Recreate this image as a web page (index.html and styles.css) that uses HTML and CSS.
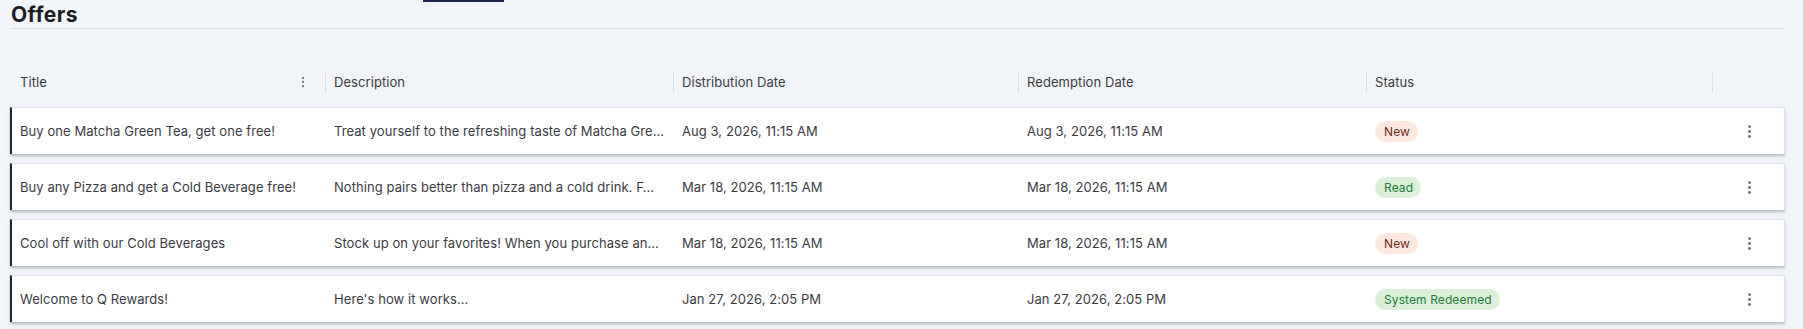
FILE: index.html
```html
<!DOCTYPE html>
<html lang="en">
<head>
<meta charset="utf-8">
<title>Offers</title>
<link rel="stylesheet" href="styles.css">
</head>
<body>
<div class="tabs"><span class="tab-indicator"></span></div>
<header class="page-head">
  <h1 class="page-title">Offers</h1>
</header>
<section class="table">
  <div class="thead">
    <div class="th th-first"><span>Title</span>
      <svg class="th-menu" viewBox="0 0 24 24" width="14" height="14"><circle cx="12" cy="5" r="2"/><circle cx="12" cy="12" r="2"/><circle cx="12" cy="19" r="2"/></svg>
    </div>
    <div class="th"><span>Description</span></div>
    <div class="th"><span>Distribution Date</span></div>
    <div class="th"><span>Redemption Date</span></div>
    <div class="th"><span>Status</span></div>
    <div class="th"></div>
  </div>
  <div class="tbody">
    <div class="tr">
      <div class="td td-first">Buy one Matcha Green Tea, get one free!</div>
      <div class="td">Treat yourself to the refreshing taste of Matcha Gre…</div>
      <div class="td">Aug 3, 2026, 11:15 AM</div>
      <div class="td">Aug 3, 2026, 11:15 AM</div>
      <div class="td"><span class="badge badge-new">New</span></div>
      <div class="td td-menu"><svg class="row-menu" viewBox="0 0 24 24" width="17" height="17"><circle cx="12" cy="5" r="2"/><circle cx="12" cy="12" r="2"/><circle cx="12" cy="19" r="2"/></svg></div>
    </div>
    <div class="tr">
      <div class="td td-first">Buy any Pizza and get a Cold Beverage free!</div>
      <div class="td">Nothing pairs better than pizza and a cold drink. F…</div>
      <div class="td">Mar 18, 2026, 11:15 AM</div>
      <div class="td">Mar 18, 2026, 11:15 AM</div>
      <div class="td"><span class="badge badge-read">Read</span></div>
      <div class="td td-menu"><svg class="row-menu" viewBox="0 0 24 24" width="17" height="17"><circle cx="12" cy="5" r="2"/><circle cx="12" cy="12" r="2"/><circle cx="12" cy="19" r="2"/></svg></div>
    </div>
    <div class="tr">
      <div class="td td-first">Cool off with our Cold Beverages</div>
      <div class="td">Stock up on your favorites! When you purchase an…</div>
      <div class="td">Mar 18, 2026, 11:15 AM</div>
      <div class="td">Mar 18, 2026, 11:15 AM</div>
      <div class="td"><span class="badge badge-new">New</span></div>
      <div class="td td-menu"><svg class="row-menu" viewBox="0 0 24 24" width="17" height="17"><circle cx="12" cy="5" r="2"/><circle cx="12" cy="12" r="2"/><circle cx="12" cy="19" r="2"/></svg></div>
    </div>
    <div class="tr">
      <div class="td td-first">Welcome to Q Rewards!</div>
      <div class="td">Here's how it works...</div>
      <div class="td">Jan 27, 2026, 2:05 PM</div>
      <div class="td">Jan 27, 2026, 2:05 PM</div>
      <div class="td"><span class="badge badge-read">System Redeemed</span></div>
      <div class="td td-menu"><svg class="row-menu" viewBox="0 0 24 24" width="17" height="17"><circle cx="12" cy="5" r="2"/><circle cx="12" cy="12" r="2"/><circle cx="12" cy="19" r="2"/></svg></div>
    </div>
  </div>
</section>
</body>
</html>
```
FILE: styles.css
```css
* { box-sizing: border-box; }
html, body { margin: 0; padding: 0; }
body {
  background: #f1f4f8;
  font-family: Inter, "Noto Sans", sans-serif;
  font-size: 13px;
  letter-spacing: 0.07px;
  color: #3a3b3f;
  width: 1803px;
  height: 329px;
  overflow: hidden;
}
.tabs { height: 2px; display: flex; }
.tab-indicator { margin-left: 423px; width: 81px; height: 2px; background: #1c2448; }

.page-head {
  margin: 0 18px 0 10px;
  padding: 1px 0 1px;
  border-bottom: 1px solid #d8dde3;
}
.page-title {
  margin: 0;
  padding-left: 1px;
  font-size: 21px;
  line-height: 24px;
  font-weight: 700;
  letter-spacing: 0.4px;
  color: #1c1d22;
}

.table { margin: 31px 18px 0 10px; }
.thead, .tr {
  display: grid;
  grid-template-columns: 313px 348px 345px 348px 346px 72px;
}
.thead {
  height: 44px;
  border-left: 2px solid transparent;
  border-right: 1px solid transparent;
  color: #3a3b3f;
}
.th {
  display: flex;
  align-items: center;
  white-space: nowrap;
}
.th::before {
  content: "";
  width: 1px;
  height: 21px;
  background: #dde1e6;
  margin-right: 8px;
  flex: none;
}
.th-first { padding-left: 8px; }
.th-first::before { display: none; }
.th-menu { margin-left: auto; margin-right: 15px; fill: #76787d; }

.tbody {
  margin-top: 3px;
  display: flex;
  flex-direction: column;
  gap: 9px;
}
.tr {
  height: 47px;
  background: #fff;
  border-top: 1px solid #dfe2e6;
  border-right: 1px solid #dfe2e6;
  border-left: 2px solid #1c2448;
  box-shadow: 0 2px 2px rgba(0, 0, 0, 0.2), 0 3px 8px rgba(0, 0, 0, 0.05);
}
.td {
  display: flex;
  align-items: center;
  padding: 0 6px 0 9px;
  white-space: nowrap;
  min-width: 0;
}
.td-first { padding-left: 8px; }
.td-menu { justify-content: center; padding: 0 0 0 2px; }
.row-menu { fill: #66686c; }

.badge {
  display: inline-flex;
  align-items: center;
  height: 21px;
  padding: 0 8px 0 9px;
  border-radius: 11px;
  font-size: 12px;
  letter-spacing: 0.1px;
}
.badge-new { background: #fde8e0; color: #6a2d1b; }
.badge-read { background: #dcf0d9; color: #1f7a36; }
```
